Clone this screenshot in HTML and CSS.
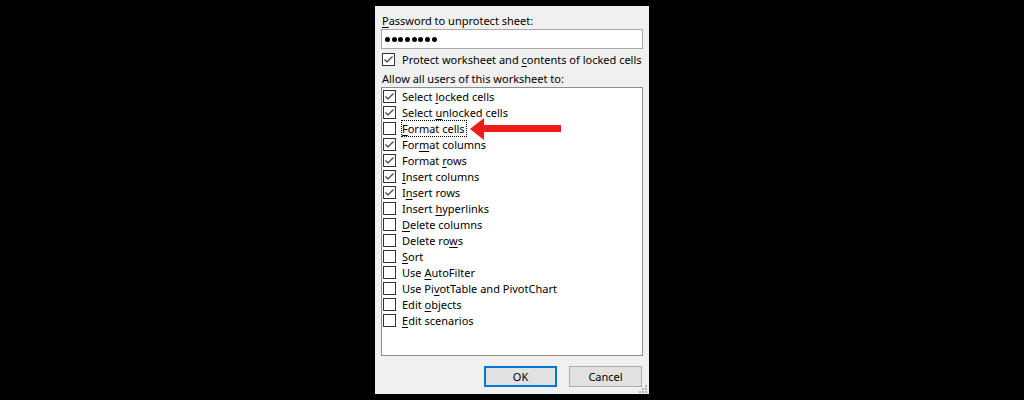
FILE: index.html
```html
<!DOCTYPE html>
<html>
<head>
<meta charset="utf-8">
<link rel="stylesheet" href="styles.css">
</head>
<body>
<div class="dialog">
  <div class="line label"><u>P</u>assword to unprotect sheet:</div>
  <div class="input"><span class="dot"></span><span class="dot"></span><span class="dot"></span><span class="dot"></span><span class="dot"></span><span class="dot"></span><span class="dot"></span><span class="dot"></span></div>
  <div class="row protect">
    <span class="cb"><svg viewBox="0 0 11 11"><path d="M1.5 5.5 L4 8 L9.5 2.5"/></svg></span>
    <span class="txt">Protect worksheet and <u>c</u>ontents of locked cells</span>
  </div>
  <div class="line allow">Allow all users of this worksheet to:</div>
  <div class="list">
    <div class="row"><span class="cb"><svg viewBox="0 0 11 11"><path d="M1.5 5.5 L4 8 L9.5 2.5"/></svg></span><span class="txt">Select <u>l</u>ocked cells</span></div>
    <div class="row"><span class="cb"><svg viewBox="0 0 11 11"><path d="M1.5 5.5 L4 8 L9.5 2.5"/></svg></span><span class="txt">Select <u>u</u>nlocked cells</span></div>
    <div class="row"><span class="cb"></span><span class="txt focus"><u>F</u>ormat cells</span></div>
    <div class="row"><span class="cb"><svg viewBox="0 0 11 11"><path d="M1.5 5.5 L4 8 L9.5 2.5"/></svg></span><span class="txt">For<u>m</u>at columns</span></div>
    <div class="row"><span class="cb"><svg viewBox="0 0 11 11"><path d="M1.5 5.5 L4 8 L9.5 2.5"/></svg></span><span class="txt">Format <u>r</u>ows</span></div>
    <div class="row"><span class="cb"><svg viewBox="0 0 11 11"><path d="M1.5 5.5 L4 8 L9.5 2.5"/></svg></span><span class="txt"><u>I</u>nsert columns</span></div>
    <div class="row"><span class="cb"><svg viewBox="0 0 11 11"><path d="M1.5 5.5 L4 8 L9.5 2.5"/></svg></span><span class="txt">I<u>n</u>sert rows</span></div>
    <div class="row"><span class="cb"></span><span class="txt">Insert <u>h</u>yperlinks</span></div>
    <div class="row"><span class="cb"></span><span class="txt"><u>D</u>elete columns</span></div>
    <div class="row"><span class="cb"></span><span class="txt">Delete ro<u>w</u>s</span></div>
    <div class="row"><span class="cb"></span><span class="txt"><u>S</u>ort</span></div>
    <div class="row"><span class="cb"></span><span class="txt">Use <u>A</u>utoFilter</span></div>
    <div class="row"><span class="cb"></span><span class="txt">Use Pi<u>v</u>otTable and PivotChart</span></div>
    <div class="row"><span class="cb"></span><span class="txt">Edit <u>o</u>bjects</span></div>
    <div class="row"><span class="cb"></span><span class="txt"><u>E</u>dit scenarios</span></div>
  </div>
  <div class="buttons">
    <div class="btn ok">OK</div>
    <div class="btn">Cancel</div>
  </div>
  <svg class="grip" viewBox="0 0 8 8"><rect x="6" y="0" width="2" height="2"/><rect x="3" y="3" width="2" height="2"/><rect x="6" y="3" width="2" height="2"/><rect x="0" y="6" width="2" height="2"/><rect x="3" y="6" width="2" height="2"/><rect x="6" y="6" width="2" height="2"/></svg>
  <svg class="arrow" viewBox="0 0 91 22"><polygon points="0,11 14,0 14,7 91,7 91,14 14,14 14,22"/></svg>
</div>
</body>
</html>
```
FILE: styles.css
```css
html, body {
  margin: 0;
  padding: 0;
  background: #000;
  width: 1024px;
  height: 400px;
  overflow: hidden;
}
body {
  display: flex;
  align-items: center;
  justify-content: center;
  font-family: "Noto Sans", "Open Sans", sans-serif;
  font-size: 11px;
  color: #000;
}
.dialog {
  position: relative;
  width: 274px;
  height: 388px;
  box-sizing: border-box;
  background: #f0f0f0;
  padding: 6px 6px 0 6px;
  display: flex;
  flex-direction: column;
}
.line {
  height: 16px;
  line-height: 17px;
  white-space: nowrap;
  padding-left: 1px;
}
u {
  text-decoration-thickness: 1px;
  text-underline-offset: 2px;
}
.input {
  margin-top: 1px;
  height: 20px;
  box-sizing: border-box;
  border: 1px solid #a9a9a9;
  background: #fff;
  display: flex;
  align-items: center;
  gap: 1.7px;
  padding-left: 3px;
}
.dot {
  width: 5px;
  height: 5px;
  border-radius: 50%;
  background: #000;
}
.row {
  height: 16px;
  display: flex;
  align-items: center;
  white-space: nowrap;
}
.protect {
  margin-top: 2px;
  padding-left: 1px;
}
.protect .txt {
  margin-left: 6px;
}
.allow {
  margin-top: 3px;
}
.cb {
  width: 13px;
  height: 13px;
  box-sizing: border-box;
  border: 1px solid #333;
  background: #fff;
  flex: none;
  display: flex;
}
.cb svg {
  width: 11px;
  height: 11px;
}
.cb path {
  fill: none;
  stroke: #3c3c3c;
  stroke-width: 1.2;
}
.txt {
  margin-left: 5px;
  line-height: 14px;
  border: 1px dotted transparent;
  padding: 1px 1px 0 0;
}
.txt.focus {
  border-color: #000;
}
.list {
  margin-top: 1px;
  height: 269px;
  box-sizing: border-box;
  border: 1px solid #8d8d8d;
  background: #fff;
  padding: 0 0 0 1px;
}
.buttons {
  margin-top: 10px;
  display: flex;
  justify-content: flex-end;
  gap: 12px;
  padding-right: 1px;
}
.btn {
  width: 73px;
  height: 21px;
  box-sizing: border-box;
  border: 1px solid #adadad;
  background: #e1e1e1;
  display: flex;
  align-items: center;
  justify-content: center;
}
.btn.ok {
  border: 2px solid #0078d7;
}
.grip {
  position: absolute;
  right: 2px;
  bottom: 1px;
  width: 8px;
  height: 8px;
  fill: #b4b4b4;
}
.arrow {
  position: absolute;
  left: 95px;
  top: 112px;
  width: 91px;
  height: 22px;
  fill: #ee1c1c;
}
```
